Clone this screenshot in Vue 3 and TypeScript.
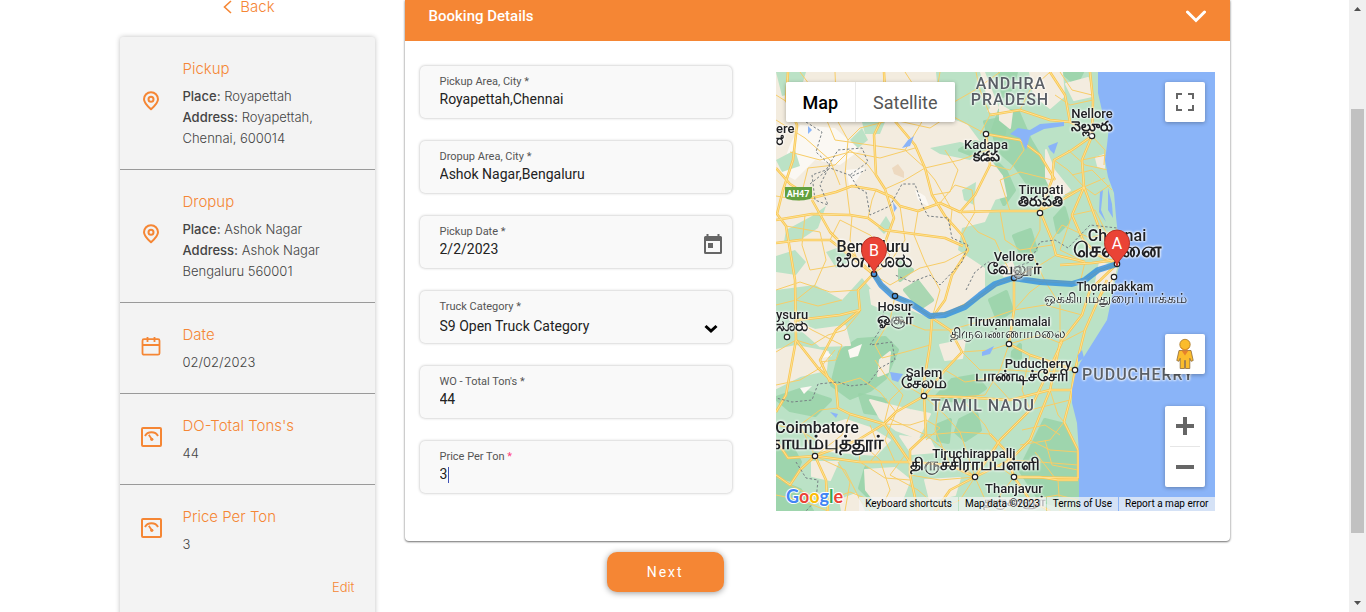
<script setup lang="ts">
import { ref } from 'vue'

interface Trip {
  icon: 'pin' | 'calendar' | 'scale'
  title: string
  rows: { label?: string; text: string }[]
}

const trips: Trip[] = [
  { icon: 'pin', title: 'Pickup', rows: [{ label: 'Place:', text: 'Royapettah' }, { label: 'Address:', text: 'Royapettah, Chennai, 600014' }] },
  { icon: 'pin', title: 'Dropup', rows: [{ label: 'Place:', text: 'Ashok Nagar' }, { label: 'Address:', text: 'Ashok Nagar Bengaluru 560001' }] },
  { icon: 'calendar', title: 'Date', rows: [{ text: '02/02/2023' }] },
  { icon: 'scale', title: "DO-Total Tons's", rows: [{ text: '44' }] },
  { icon: 'scale', title: 'Price Per Ton', rows: [{ text: '3' }] },
]

const pickupArea = ref('Royapettah,Chennai')
const dropArea = ref('Ashok Nagar,Bengaluru')
const pickupDate = ref('2/2/2023')
const category = ref('S9 Open Truck Category')
const tons = ref('44')
const price = ref('3')

interface Label {
  x: number
  y: number
  t: string
  s: number
  c?: string
  a?: 'start' | 'middle' | 'end'
}

const labels: Label[] = [
  { x: 1011, y: 89, t: 'ANDHRA', s: 16, c: 'region' },
  { x: 1010, y: 105, t: 'PRADESH', s: 16, c: 'region' },
  { x: 1092, y: 118, t: 'Nellore', s: 13 },
  { x: 1092, y: 131, t: 'నెల్లూరు', s: 14, c: 'native' },
  { x: 986, y: 149, t: 'Kadapa', s: 13 },
  { x: 986, y: 161, t: 'కడప', s: 14, c: 'native' },
  { x: 776, y: 133, t: 'ere', s: 13, a: 'start' },
  { x: 776, y: 145, t: 'ರೆ', s: 14, c: 'native', a: 'start' },
  { x: 1041, y: 194, t: 'Tirupati', s: 13 },
  { x: 1040, y: 206, t: 'తిరుపతి', s: 14, c: 'native' },
  { x: 1117, y: 241, t: 'Chennai', s: 16 },
  { x: 1117, y: 257, t: 'சென்னை', s: 21, c: 'native' },
  { x: 873, y: 252, t: 'Bengaluru', s: 16 },
  { x: 874, y: 267, t: 'ಬೆಂಗಳೂರು', s: 20, c: 'native' },
  { x: 1014, y: 261, t: 'Vellore', s: 13 },
  { x: 1014, y: 274, t: 'வேலூர்', s: 16, c: 'native' },
  { x: 1115, y: 291, t: 'Thoraipakkam', s: 12 },
  { x: 1115, y: 303, t: 'ஒக்கியம்துரைப்பாக்கம்', s: 14, c: 'light' },
  { x: 895, y: 311, t: 'Hosur', s: 13 },
  { x: 895, y: 324, t: 'ஓசூர்', s: 16, c: 'native' },
  { x: 776, y: 319, t: 'ysuru', s: 13, a: 'start' },
  { x: 776, y: 331, t: 'ಸೂರು', s: 16, c: 'native', a: 'start' },
  { x: 1009, y: 326, t: 'Tiruvannamalai', s: 12 },
  { x: 1008, y: 338, t: 'திருவண்ணாமலை', s: 14, c: 'light' },
  { x: 1038, y: 368, t: 'Puducherry', s: 13 },
  { x: 1022, y: 381, t: 'பாண்டிச்சேரி', s: 16, c: 'native' },
  { x: 1138, y: 380, t: 'PUDUCHERRY', s: 16, c: 'region' },
  { x: 924, y: 377, t: 'Salem', s: 13 },
  { x: 924, y: 388, t: 'சேலம்', s: 16, c: 'native' },
  { x: 983, y: 411, t: 'TAMIL NADU', s: 16, c: 'region' },
  { x: 817, y: 433, t: 'Coimbatore', s: 16 },
  { x: 883, y: 449, t: 'கோயம்புத்தூர்', s: 20, c: 'native', a: 'end' },
  { x: 974, y: 458, t: 'Tiruchirappalli', s: 13 },
  { x: 975, y: 470, t: 'திருச்சிராப்பள்ளி', s: 17, c: 'native' },
  { x: 1014, y: 493, t: 'Thanjavur', s: 13 },
  { x: 1014, y: 506, t: 'தஞ்சாவூர்', s: 14, c: 'native' },
]

const towns: [number, number][] = [
  [1092, 136], [986, 134], [1040, 213], [1114, 277], [787, 337], [1009, 344],
  [1075, 370], [924, 396], [815, 456], [975, 477], [1014, 477], [895, 296], [1014, 278], [1117, 264], [874, 274],
]

const majorRoads: string[] = [
  '788,72 786,100 797,125 793,160 783,190 777,214 786,226 795,280 796,340 786,395 776,412',
  '776,168 790,184 812,198 836,192 852,186 876,190 892,197 900,206 918,211 940,203 960,212 1000,211 1038,211 1055,204 1084,187',
  '884,72 886,110 874,135 876,175 885,189 894,218 886,240 873,274',
  '894,120 915,145 925,168 932,195 945,216 962,235 968,250 952,275 945,300 932,318 930,345 922,394',
  '776,243 800,240 830,240 858,262 873,274',
  '776,220 812,214 850,215 868,218 884,230 915,234 945,238 963,246',
  '812,200 830,232 850,252 873,274',
  '873,274 858,290 860,310 840,315 815,318 796,320',
  '873,274 881,285 895,296 910,303 930,316 950,312 975,300 1000,282 1014,278 1045,281 1080,283 1100,270 1117,264',
  '1117,264 1098,255 1083,240 1072,215 1084,187 1082,160 1092,136 1093,100 1090,72',
  '1092,136 1072,150 1054,160 1052,180 1040,211 1052,240 1056,255 1085,262',
  '1084,187 1098,225 1115,260 1092,263 1060,265',
  '986,134 990,165 975,195 960,212',
  '986,134 1020,140 1040,155 1055,180',
  '990,115 1020,110 1050,120 1070,122 1092,133',
  '1050,72 1065,95 1070,122',
  '1014,278 1014,310 1009,344 1030,355 1075,370',
  '1117,264 1090,290 1082,315 1060,343 1050,390 1030,440 1010,460 975,477',
  '1107,280 1085,330 1075,370 1070,400 1064,422 1078,450 1078,478 1014,477',
  '924,396 960,397 1010,400 1050,390 1074,390',
  '924,396 896,412 884,424 858,440 815,456 788,458 776,440',
  '924,396 926,435 910,450 910,475 918,511',
  '975,477 950,490 935,511',
  '975,477 1000,440 1030,410 1062,342',
  '815,456 826,480 828,511',
  '815,456 800,470 790,485 776,475',
  '815,456 860,462 910,462 950,465 975,477',
  '796,340 818,368 836,385 838,408 850,414 884,424',
  '860,310 836,330 820,360 830,382',
  '884,424 905,455 915,470',
  '1014,477 1040,477 1058,480 1078,480',
  '1014,477 1030,500 1050,511',
  '990,434 1005,450 1014,477',
  '932,318 950,330 962,352 945,370 924,396',
]

const minorRoads: string[] = [
  '776,95 800,110 835,104 870,112 900,100 940,110 975,90 1000,72',
  '800,72 815,92 835,140 870,145 905,150 925,168 960,160 988,150',
  '835,72 837,120 848,140 845,175 850,215',
  '790,152 820,160 850,152 880,158 915,148',
  '800,200 808,168 835,165 850,150 868,165 876,176',
  '905,72 920,95 950,115 986,134',
  '940,72 935,100 920,125 905,150',
  '776,120 805,138 830,160 840,185',
  '786,226 820,232 826,260 815,285 796,300',
  '830,240 840,220 870,235 890,255 873,274',
  '805,215 802,245 810,270 840,265',
  '858,262 850,240 852,216',
  '900,206 905,240 890,262 873,274 890,285 920,268 945,262 968,250',
  '918,211 914,235 925,262 940,290 932,318',
  '940,203 955,185 972,190 975,212 962,235',
  '932,195 950,192 958,170 945,150',
  '960,212 978,232 995,240 1005,262 1014,278',
  '1000,211 1005,240 1020,250 1052,245',
  '776,290 800,282 830,292 858,290',
  '776,305 796,300 818,306 842,300',
  '776,352 796,340 812,345 828,335 845,330 860,312',
  '796,320 812,330 842,345 836,360 820,362',
  '776,385 800,380 820,368 835,350',
  '836,385 860,378 880,392 896,412',
  '838,408 820,410 800,425 815,456',
  '850,414 842,435 815,456',
  '776,425 800,430 815,440',
  '858,440 860,462 885,478 910,480',
  '858,440 880,460 890,490 880,511',
  '815,456 845,470 860,500 870,511',
  '790,485 810,495 828,500 850,492 870,500',
  '776,495 800,500 828,511',
  '838,462 850,482 845,511',
  '884,424 890,400 905,385 924,396',
  '884,424 910,425 926,420 940,428 926,440',
  '896,412 903,395 885,375 875,360',
  '896,412 885,440 895,462',
  '870,425 880,450 870,462',
  '888,418 926,435 960,432 990,434',
  '924,396 945,415 960,432 975,477',
  '940,397 935,430 950,465',
  '960,397 985,425 990,434',
  '895,296 890,320 875,345 882,358 905,352 930,345',
  '895,318 925,330 950,330 985,320 1014,310',
  '962,352 990,350 1009,344',
  '962,352 980,370 1010,370 1040,372 1075,370',
  '945,370 965,382 990,378 1010,400',
  '1009,344 1000,370 985,395 960,397',
  '1009,344 1040,335 1060,343 1085,330',
  '1014,310 1045,305 1082,315',
  '1014,310 1030,292 1045,281 1060,305 1060,343',
  '1045,281 1030,250 1040,230 1040,211',
  '1085,330 1098,300 1114,277',
  '1080,283 1085,262 1060,250 1072,215',
  '1072,215 1095,210 1110,240',
  '1056,255 1040,265 1014,278',
  '1010,211 1000,180 1020,172 1052,180',
  '990,165 1010,170 1024,150 1020,140',
  '1054,160 1068,170 1084,187 1105,178',
  '1068,150 1085,165 1108,170',
  '1082,160 1106,155',
  '1072,175 1092,170 1112,190',
  '1065,195 1084,187 1095,195 1110,185',
  '1052,240 1062,225 1090,238 1117,230',
  '1092,136 1105,150 1104,165',
  '1060,72 1072,90 1092,95',
  '1020,110 1030,90 1050,72',
  '976,72 980,90 990,115 980,134',
  '1093,100 1070,105 1055,95',
  '1030,355 1022,390 1030,410',
  '1050,390 1058,415 1064,422 1050,440 1020,445',
  '1030,440 1050,450 1078,452',
  '1010,460 1040,462 1078,465',
  '1035,452 1055,478',
  '1030,410 1050,405 1070,400',
  '1022,430 1045,425 1060,435',
  '1045,440 1052,465 1078,470',
  '1000,440 990,460 1014,477',
  '910,475 940,480 975,477',
  '935,511 960,500 975,477 990,511',
  '905,455 890,475 918,490 935,505',
  '926,435 945,450 975,477',
  '1014,477 1000,495 1005,511',
  '1058,480 1060,511',
  '1030,500 1058,495 1078,500',
  '848,140 860,128 884,122',
  '925,168 935,180 952,210 950,228',
  '894,120 930,128 950,115',
  '776,196 800,200',
  '885,189 905,180 925,168',
  '868,218 872,200 876,190',
]

const forest: string[] = [
  '1000,110 1018,112 1030,140 1045,165 1048,190 1034,192 1015,165 998,150 993,130',
  '1000,72 1016,72 1012,88 1003,96',
  '960,150 975,142 990,146 980,158',
  '985,122 1006,118 1004,134 988,132',
  '992,158 1006,172 1014,190 1004,204 996,185',
  '1055,218 1064,208 1068,222 1058,232',
  '1062,72 1082,72 1076,84',
  '840,352 858,340 885,338 897,350 885,378 870,390 850,398 832,385',
  '860,395 885,400 890,415 865,412',
  '776,398 800,390 830,400 815,415 790,410',
  '776,440 790,444 800,462 792,480 776,476',
  '935,398 952,380 975,376 985,388 965,402',
  '938,425 950,420 948,442 938,440',
  '960,420 976,412 980,430 965,440 956,432',
  '905,290 918,282 932,300 920,308',
  '990,300 1006,292 1012,310 998,320',
  '1013,352 1020,345 1020,358 1012,362',
  '776,480 800,490 812,511 776,511',
  '866,468 880,480 872,500 860,488',
  '900,262 912,270 900,280',
  '1045,420 1065,425 1078,455 1078,511 1040,500 1020,470',
  '1014,236 1030,230 1036,250 1022,256',
]

const cream: string[] = [
  '1000,105 1012,112 1010,128 1000,120',
  '1030,72 1062,72 1064,96 1050,108 1034,95',
  '1066,84 1088,78 1092,96 1074,100',
  '990,160 1002,176 1006,196 990,200',
  '1046,150 1054,170 1070,190 1056,200 1046,178',
  '1096,158 1104,155 1104,168 1098,166',
  '776,350 796,346 828,352 826,370 800,376 776,388',
  '790,320 815,330 845,326 850,345 820,346',
  '820,428 846,420 870,428 890,440 876,455 840,452 815,450',
  '870,400 885,404 910,410 930,414 918,438 896,430 880,418',
  '865,470 895,468 910,480 900,505 880,508 866,490',
  '880,360 890,352 888,372 878,376',
  '940,345 965,340 962,358 945,360',
  '900,436 930,440 936,452 912,454',
  '925,480 960,478 955,495 930,500',
  '812,462 838,462 830,480 812,476',
  '930,270 970,262 976,290 950,300 925,285',
  '870,290 890,296 904,306 886,310 872,304',
  '1000,268 1012,262 1016,274 1004,276',
  '1100,262 1116,268 1112,284 1096,282',
  '840,500 856,494 864,511 842,511',
]

const green: string[] = [
  '776,72 806,72 800,92 782,96',
  '862,122 885,122 880,134 865,134',
  '936,72 980,72 990,108 972,126 950,118 938,92',
  '970,102 1000,118 1002,160 985,148 968,125',
  '776,160 795,150 800,166 782,172',
  '786,230 812,216 826,206 818,228 800,240 784,242',
  '878,228 886,216 892,226 884,234',
  '930,148 960,142 985,148 970,160 940,154',
  '776,256 795,250 806,262 796,275 776,272',
  '826,252 842,246 850,262 836,268',
  '850,140 862,128 868,140 858,148',
  '962,190 976,182 974,205 964,200',
]

const borders: string[] = [
  '806,122 822,132 816,152 830,165 820,185 828,205 815,200 812,175 826,170 838,150 862,148 868,162 850,175 858,188 866,192 870,215 890,206 902,184 915,184 922,205 928,216 948,218 952,238 968,245 962,262 940,285 930,275 912,282 895,275',
  '884,310 880,330 870,345 892,342 895,360 880,368 868,384 850,386 838,382 818,384 812,400 792,402 776,398',
  '966,290 975,272 988,262 1012,268 1030,262 1040,242 1055,240 1068,248 1090,225 1117,228',
  '796,462 806,478 818,480 816,500 806,511',
  '810,184 830,168 852,176 866,170',
]

const water: string[] = [
  '1018,128 1030,130 1040,124 1064,122 1064,126 1044,129 1030,136 1026,150 1020,138 1010,134',
  '1048,146 1058,142 1054,154 1050,150',
  '890,372 903,374 898,382 892,380',
  '1100,192 1103,190 1101,210 1106,222 1099,212',
  '1108,188 1112,204 1113,218 1108,210',
  '908,140 914,136 910,146 902,148',
  '893,202 897,208 894,212',
  '1078,355 1082,350 1084,358 1078,362',
  '982,352 994,346 990,354 982,356',
  '808,126 812,130 808,134',
  '830,412 838,414 836,418',
]
</script>

<template>
  <div class="page">
    <div class="viewport">
      <div class="container">
        <div class="side-col">
          <a class="back" href="#">
            <svg width="9" height="14" viewBox="0 0 9 14" aria-hidden="true"><path d="M8 1 1.5 7 8 13" fill="none" stroke="currentColor" stroke-width="1.6" /></svg>
            <span>Back</span>
          </a>
          <aside class="summary">
            <section v-for="trip in trips" :key="trip.title" class="trip">
              <div class="trip-icon">
                <svg v-if="trip.icon === 'pin'" width="18" height="20" viewBox="0 0 18 20" fill="none" stroke="currentColor" stroke-width="2" aria-hidden="true">
                  <path d="M9 18.2C5 14.6 2 12 2 8.2a7 7 0 0 1 14 0c0 3.800-3 6.400-7 10Z" stroke-linejoin="round" />
                  <circle cx="9" cy="8.200" r="2.500" />
                </svg>
                <svg v-else-if="trip.icon === 'calendar'" width="20" height="20" viewBox="0 0 20 20" fill="none" stroke="currentColor" stroke-width="1.800" aria-hidden="true">
                  <rect x="1.500" y="3.200" width="17" height="15.500" rx="1.500" />
                  <path d="M1.500 9h17M6.500 1v5M13.500 1v5" />
                </svg>
                <svg v-else width="22" height="22" viewBox="0 0 22 22" fill="none" stroke="currentColor" aria-hidden="true">
                  <rect x="2" y="2" width="19" height="18" rx="1" stroke-width="2" />
                  <path d="M5 10C7.500 5 15.500 5 18 10" stroke-width="2" />
                  <path d="M8.800 8.800 12 13.500" stroke-width="1.8" />
                  <circle cx="11.800" cy="13.300" r="1.600" fill="currentColor" stroke="none" />
                </svg>
              </div>
              <div class="trip-text">
                <h2>{{ trip.title }}</h2>
                <p v-for="row in trip.rows" :key="row.text"><b v-if="row.label">{{ row.label }}</b>{{ row.label ? ' ' : '' }}{{ row.text }}</p>
              </div>
            </section>
            <a class="edit" href="#">Edit</a>
          </aside>
        </div>

        <main class="main-col">
          <div class="card">
            <header class="card-head">
              <h1>Booking Details</h1>
              <button type="button" class="toggle" aria-label="Collapse">
                <svg width="20" height="13" viewBox="0 0 20 13" aria-hidden="true"><path d="M1.500 2 10 10.500l8.500-8.500" fill="none" stroke="currentColor" stroke-width="3" stroke-linecap="round" /></svg>
              </button>
            </header>
            <div class="card-body">
              <form class="fields" @submit.prevent>
                <div class="field">
                  <label for="pickup">Pickup Area, City *</label>
                  <input id="pickup" v-model="pickupArea" type="text">
                </div>
                <div class="field">
                  <label for="drop">Dropup Area, City *</label>
                  <input id="drop" v-model="dropArea" type="text">
                </div>
                <div class="field">
                  <label for="date">Pickup Date *</label>
                  <input id="date" v-model="pickupDate" type="text">
                  <button type="button" class="date-btn" aria-label="Open calendar">
                    <svg width="20" height="21" viewBox="0 0 20 21" fill="currentColor" aria-hidden="true">
                      <path fill-rule="evenodd" d="M3.500 0h2v2h9V0h2v2H17.500A1.500 1.500 0 0 1 19 3.500V18.500A1.500 1.500 0 0 1 17.500 20H2.500A1.500 1.500 0 0 1 1 18.500V3.500A1.500 1.500 0 0 1 2.500 2h1ZM3 7v11h14V7Z" />
                      <path d="M5 9h5v5H5z" />
                    </svg>
                  </button>
                </div>
                <div class="field">
                  <label for="category">Truck Category *</label>
                  <select id="category" v-model="category">
                    <option>S9 Open Truck Category</option>
                  </select>
                  <svg class="caret-down" width="14" height="10" viewBox="0 0 14 10" aria-hidden="true"><path d="m1.500 2 5.500 5L12.500 2" fill="none" stroke="#000" stroke-width="3" /></svg>
                </div>
                <div class="field">
                  <label for="tons">WO - Total Ton's *</label>
                  <input id="tons" v-model="tons" type="text">
                </div>
                <div class="field">
                  <label for="price">Price Per Ton <span class="required">*</span></label>
                  <input id="price" v-model="price" type="text">
                  <span class="text-caret" aria-hidden="true"></span>
                </div>
              </form>

              <div class="map">
                <svg class="map-art" viewBox="776 72 439 439" role="img" aria-label="Route from Chennai to Bengaluru">
                  <rect x="776" y="72" width="439" height="439" fill="#f3ecdf" />
                  <g fill="#fbf8f3">
                    <path d="M800 125 835 128 860 150 840 165 815 160 795 180 780 172 790 145Z" />
                    <path d="M915 190 925 196 930 208 918 200ZM846 170 865 168 850 190Z" />
                  </g>
                  <path fill="#bbe2c6" d="M985 72 1000 110 1000 150 992 165 1000 190 985 222 962 228 958 250 985 268 985 290 960 308 935 320 905 308 880 300 862 278 842 300 815 285 776 290V511H1215V72Z" />
                  <polygon v-for="p in green" :key="p" :points="p" fill="#bbe2c6" />
                  <polygon v-for="p in forest" :key="p" :points="p" fill="#98d3a8" stroke="#98d3a8" stroke-width="4" stroke-linejoin="round" opacity="0.8" />
                  <polygon v-for="p in cream" :key="p" :points="p" fill="#f3ecdf" stroke="#f3ecdf" stroke-width="2" stroke-linejoin="round" />
                  <path fill="#fbf8f3" d="M848 350 862 344 858 356 850 358ZM826 350 832 356 822 358ZM800 388 812 386 804 394Z" />
                  <path fill="#edd9c0" d="M892 168 898 164 904 172 904 178 894 174Z" />
                  <g fill="none" stroke="#f8cd67" stroke-width="1">
                    <polyline v-for="p in minorRoads" :key="p" :points="p" />
                  </g>
                  <g fill="none" stroke-linejoin="round">
                    <polyline v-for="p in majorRoads" :key="p" :points="p" stroke="#f9c653" stroke-width="2.500" />
                    <polyline v-for="p in majorRoads" :key="p + 'c'" :points="p" stroke="#fde293" stroke-width="1" />
                  </g>
                  <g fill="none" stroke="#777f84" stroke-width="1" stroke-dasharray="2.500 2">
                    <polyline v-for="p in borders" :key="p" :points="p" />
                  </g>
                  <polygon v-for="p in water" :key="p" :points="p" fill="#8ab4f8" />
                  <path fill="#8ab4f8" d="M1098 72V93L1103 115 1109 127 1107 145 1105 160 1108 177 1114 193 1116 217 1118 235 1119 267 1115 282 1107 320 1090 347 1080 363 1075 376 1072 390 1072 403 1077 423 1079 453V511H1215V72Z" />
                  <g>
                    <path d="M785 187h27v10l-2 2q-12 3-23 0l-2-2Z" fill="#62a03f" />
                    <text x="798" y="197" class="shield" text-anchor="middle">AH47</text>
                  </g>
                  <polyline points="874,274 881,285 893,296 910,303 930,316 945,315 965,307 980,295 995,284 1013,278 1040,282 1072,284 1085,280 1098,270 1117,264" fill="none" stroke="#2f8de0" stroke-opacity="0.8" stroke-width="6" stroke-linejoin="round" />
                  <circle v-for="t in towns" :key="t.join()" :cx="t[0]" :cy="t[1]" r="2.700" :fill="t[1] === 278 || t[1] === 296 || t[1] === 274 ? '#4a94dd' : '#fff'" stroke="#222" stroke-width="1.200" />
                  <g class="places">
                    <text
                      v-for="l in labels"
                      :key="l.t"
                      :x="l.x"
                      :y="l.y"
                      :font-size="l.s"
                      :text-anchor="l.a ?? 'middle'"
                      :class="['place', l.c]"
                    >{{ l.t }}</text>
                  </g>
                  <g v-for="m in [{ x: 874, y: 273, t: 'B' }, { x: 1117, y: 266, t: 'A' }]" :key="m.t" :transform="`translate(${m.x} ${m.y})`">
                    <path d="M0 0C-2-9-12.500-12-12.500-23.500a12.500 12.500 0 0 1 25 0C12.500-12 2-9 0 0Z" fill="#ea4335" stroke="#b93226" stroke-width="1" />
                    <text x="0" y="-17" class="pin-letter" text-anchor="middle">{{ m.t }}</text>
                  </g>
                  <text x="786" y="503" class="logo"><tspan fill="#4285f4">G</tspan><tspan fill="#ea4335">o</tspan><tspan fill="#fbbc04">o</tspan><tspan fill="#4285f4">g</tspan><tspan fill="#34a853">l</tspan><tspan fill="#ea4335">e</tspan></text>
                </svg>

                <div class="map-types">
                  <button type="button" class="active">Map</button>
                  <button type="button">Satellite</button>
                </div>
                <button type="button" class="map-btn fullscreen" aria-label="Toggle fullscreen">
                  <svg width="18" height="18" viewBox="0 0 18 18" aria-hidden="true"><path d="M1 6V1h5M12 1h5v5M17 12v5h-5M6 17H1v-5" fill="none" stroke="#666" stroke-width="2" /></svg>
                </button>
                <div class="map-tools">
                  <button type="button" class="map-btn" aria-label="Street View">
                    <svg width="18" height="32" viewBox="0 0 18 32" aria-hidden="true">
                      <path d="M3 12.500h12l2.200 10-2.200.8-1.200-3V30.500h-4.300v-8h-1v8H4.200V20.300l-1.200 3-2.200-.8Z" fill="#fbbc2c" stroke="#8c6a3c" stroke-width=".8" stroke-linejoin="round" />
                      <path d="M5.500 12.500h7L9 17.500Z" fill="#e5812b" />
                      <circle cx="9" cy="6.500" r="5.200" fill="#fbbc2c" stroke="#a87322" stroke-width=".8" />
                      <path d="M4.500 9.500q4.500 4.500 9 0" fill="none" stroke="#e5912b" stroke-width="1" />
                    </svg>
                  </button>
                  <div class="zoom">
                    <button type="button" aria-label="Zoom in">
                      <svg width="18" height="18" viewBox="0 0 18 18" aria-hidden="true"><path d="M9 0v18M0 9h18" stroke="#666" stroke-width="4" /></svg>
                    </button>
                    <button type="button" aria-label="Zoom out">
                      <svg width="18" height="18" viewBox="0 0 18 18" aria-hidden="true"><path d="M0 9h18" stroke="#666" stroke-width="4" /></svg>
                    </button>
                  </div>
                </div>
                <div class="attribution">
                  <button type="button">Keyboard shortcuts</button>
                  <span>Map data ©2023</span>
                  <a href="#">Terms of Use</a>
                  <a href="#">Report a map error</a>
                </div>
              </div>
            </div>
          </div>
          <button type="button" class="next">Next</button>
        </main>
      </div>
    </div>
    <div class="scrollbar" aria-hidden="true">
      <svg width="7" height="4" viewBox="0 0 7 4"><path d="M0 4 3.500 0 7 4Z" fill="#505050" /></svg>
      <div class="thumb"></div>
      <svg width="7" height="4" viewBox="0 0 7 4"><path d="M0 0h7L3.500 4Z" fill="#505050" /></svg>
    </div>
  </div>
</template>

<style>
body {
  overflow: hidden;
  background: #fff;
}
</style>

<style scoped>
* {
  box-sizing: border-box;
}
.page {
  display: flex;
  height: 100vh;
  overflow: hidden;
  font-family: Roboto, "Liberation Sans", sans-serif;
}
button,
input,
select {
  font-family: inherit;
  border: 0;
  padding: 0;
  margin: 0;
  background: none;
  outline: 0;
}
h1,
h2,
p {
  margin: 0;
  font-weight: 400;
}
a {
  text-decoration: none;
}
svg {
  display: block;
}
.viewport {
  flex: 1;
  min-width: 0;
}
.container {
  display: flex;
  max-width: 1140px;
  margin: 0 auto;
}
.side-col {
  flex: 0 0 25%;
  padding: 0 15px;
  font-family: Inter, "Liberation Sans", sans-serif;
  font-weight: 300;
}
.main-col {
  flex: 1;
  min-width: 0;
  padding: 0 15px;
}
.back {
  display: flex;
  align-items: center;
  justify-content: center;
  gap: 8px;
  height: 14px;
  margin-bottom: 23px;
  padding-left: 4px;
  font-size: 15px;
  line-height: 14px;
  color: #f58634;
}
.summary {
  min-height: 600px;
  border-radius: 3px;
  background: #f3f3f3;
  box-shadow: 0 0 5px rgba(0, 0, 0, 0.25);
  color: #444;
}
.trip {
  display: flex;
  padding: 20px 20px 20px 0;
  border-bottom: 1px solid #999;
}
.trip:last-of-type {
  border-bottom: 0;
}
.trip-icon {
  display: flex;
  flex: 0 0 63px;
  align-items: center;
  justify-content: center;
  padding-bottom: 5px;
  color: #f58634;
}
.trip-text {
  flex: 1;
  min-width: 0;
}
.trip h2 {
  margin-bottom: 5px;
  font-size: 15px;
  line-height: 24px;
  font-weight: 300;
  color: #f58634;
}
.trip p {
  max-width: 144px;
  font-size: 13px;
  line-height: 21px;
  font-weight: 300;
}
.trip b {
  font-weight: 500;
}
.edit {
  display: block;
  padding: 2px 20px;
  font-size: 13px;
  line-height: 21px;
  text-align: right;
  color: #f58634;
}
.card {
  border-radius: 0 0 4px 4px;
  background: #fff;
  box-shadow: 0 1px 2px rgba(0, 0, 0, 0.5), 0 0 3px rgba(0, 0, 0, 0.2);
}
.card-head {
  display: flex;
  align-items: center;
  justify-content: space-between;
  padding: 6px 24px 15px;
  background: #f58634;
  color: #fff;
}
.card-head h1 {
  font-size: 15px;
  line-height: 20px;
  font-weight: 500;
}
.toggle {
  color: #fff;
}
.card-body {
  display: grid;
  grid-template-columns: minmax(0, 312fr) minmax(0, 439fr);
  column-gap: 44px;
  align-items: start;
  padding: 25px 15px 30px;
}
.fields {
  display: grid;
  gap: 23px;
}
.field {
  position: relative;
  display: flex;
  flex-direction: column;
  padding: 9px 20px;
  border-radius: 5px;
  background: #f9f9f9;
  box-shadow: 0 0 3px rgba(0, 0, 0, 0.3);
}
.field label {
  font-size: 11px;
  line-height: 14px;
  color: #555;
}
.required {
  color: #ff4081;
}
.field input,
.field select {
  width: 100%;
  height: 20px;
  font-size: 14px;
  line-height: 20px;
  color: #222;
  appearance: none;
}
.field select {
  padding-top: 2px;
}
.date-btn {
  position: absolute;
  right: 9px;
  top: 18px;
  color: #666;
}
.caret-down {
  position: absolute;
  right: 14px;
  top: 33px;
  pointer-events: none;
}
.text-caret {
  position: absolute;
  left: 28px;
  top: 26px;
  width: 1px;
  height: 16px;
  background: #3f51b5;
}
.map {
  position: relative;
  margin-top: 6px;
  aspect-ratio: 1;
  overflow: hidden;
}
.map-art {
  width: 100%;
  height: 100%;
}
.places {
  filter: drop-shadow(0 0 1px #fff) drop-shadow(0 0 1px #fff);
}
.place {
  font-family: Roboto, "Noto Sans", sans-serif;
  font-weight: 500;
  fill: #202124;
}
.region {
  fill: #5a5f66;
  letter-spacing: 1px;
}
.native {
  font-weight: 700;
}
.light {
  font-weight: 400;
}
.shield {
  font-size: 9px;
  font-weight: 700;
  fill: #fff;
}
.pin-letter {
  font-size: 16px;
  fill: #fff;
}
.logo {
  font-family: Lato, sans-serif;
  font-size: 18px;
  font-weight: 700;
  stroke: #fff;
  stroke-width: 2px;
  paint-order: stroke;
}
.map-types {
  position: absolute;
  left: 10px;
  top: 10px;
  display: flex;
  gap: 1px;
  height: 40px;
  border-radius: 2px;
  background: #e8e8e8;
  box-shadow: 0 1px 4px rgba(0, 0, 0, 0.3);
  overflow: hidden;
}
.map-types button {
  padding: 0 17px;
  font-size: 18px;
  color: #565656;
  background: #fff;
}
.map-types .active {
  font-weight: 500;
  color: #000;
}
.map-btn {
  display: grid;
  place-items: center;
  width: 40px;
  height: 40px;
  border-radius: 2px;
  background: #fff;
  box-shadow: 0 1px 4px rgba(0, 0, 0, 0.3);
}
.fullscreen {
  position: absolute;
  right: 10px;
  top: 10px;
}
.map-tools {
  position: absolute;
  right: 10px;
  bottom: 24px;
  display: grid;
  gap: 32px;
}
.zoom {
  border-radius: 2px;
  background: #fff;
  box-shadow: 0 1px 4px rgba(0, 0, 0, 0.3);
}
.zoom button {
  display: grid;
  place-items: center;
  width: 40px;
  height: 40px;
}
.zoom button + button {
  position: relative;
  height: 41px;
}
.zoom button + button::before {
  content: "";
  position: absolute;
  top: 0;
  left: 5px;
  right: 5px;
  height: 1px;
  background: #e6e6e6;
}
.attribution {
  position: absolute;
  right: 0;
  bottom: 0;
  display: flex;
  gap: 1px;
  font-size: 10px;
  line-height: 14px;
}
.attribution > * {
  padding: 0 6px;
  font-size: 10px;
  line-height: 14px;
  color: #000;
  white-space: nowrap;
  background: rgba(245, 245, 245, 0.7);
}
.next {
  display: block;
  width: 117px;
  height: 40px;
  margin: 11px 0 0 24.5%;
  border-radius: 10px;
  background: #f58634;
  box-shadow: 0 1px 6px rgba(0, 0, 0, 0.4);
  color: #fff;
  font-size: 14px;
  font-weight: 400;
  letter-spacing: 2px;
}
.scrollbar {
  display: flex;
  flex: 0 0 17px;
  flex-direction: column;
  align-items: center;
  justify-content: space-between;
  padding: 7px 2px;
  background: #f0f0f0;
}
.thumb {
  width: 13px;
  height: 71%;
  margin-top: 78px;
  margin-bottom: 48px;
  background: #c1c1c1;
}
</style>
